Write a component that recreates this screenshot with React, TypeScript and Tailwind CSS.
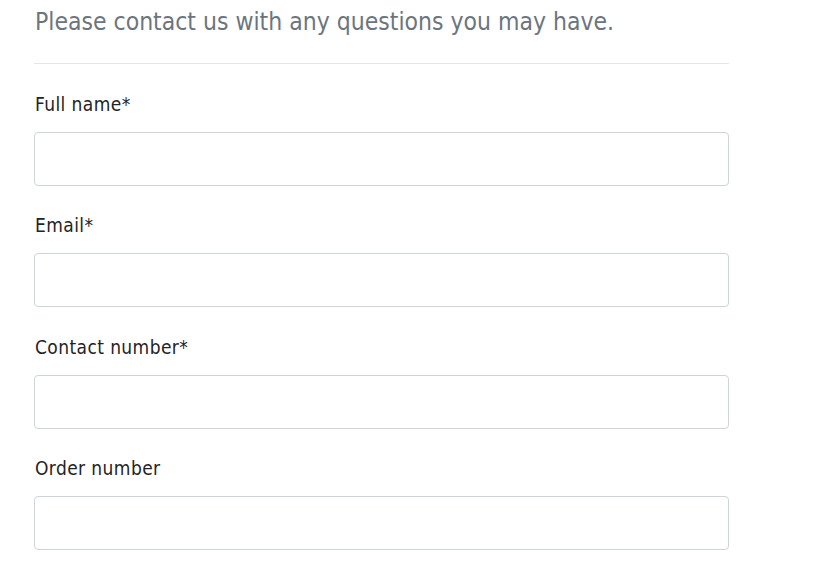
import React from 'react';

const fields = [
    { id: 'fullname', label: 'Full name*' },
    { id: 'email', label: 'Email*' },
    { id: 'phone', label: 'Contact number*' },
    { id: 'order', label: 'Order number' },
];

export default function App() {
    return (
        <div className="min-h-screen bg-white pt-[5px] pl-[34px] font-['DejaVu_Sans_Condensed',sans-serif]">
            <div className="w-[695px]">
                <h2 className="pl-px text-[24.5px] leading-[34px] text-[#6c757d]">
                    Please contact us with any questions you may have.
                </h2>
                <hr className="mt-[24px] border-t border-[#e5e5e5]" />
                <form className="flex flex-col">
                    {fields.map(f => (
                        <div key={f.id} className="mt-[27.5px] flex flex-col">
                            <label htmlFor={f.id} className="pl-px text-[19px] leading-6 tracking-[0.4px] text-[#1f2326]">{f.label}</label>
                            <input id={f.id} type="text" className="mt-4 h-[54px] w-full rounded border border-[#ced4da] bg-white px-3 outline-none" />
                        </div>
                    ))}
                </form>
            </div>
        </div>
    );
}
